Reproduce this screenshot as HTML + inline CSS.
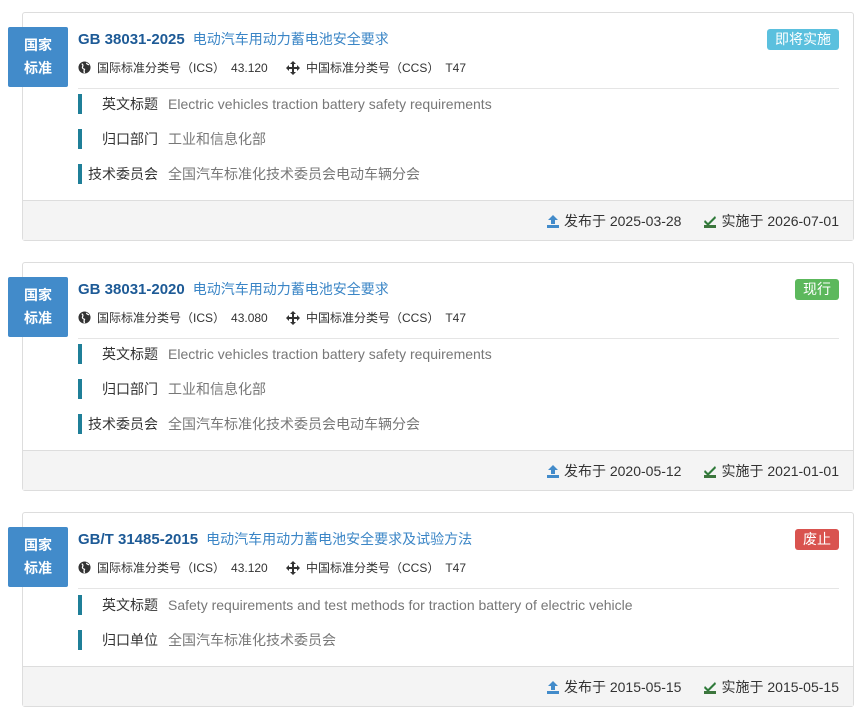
<!DOCTYPE html>
<html><head><meta charset="utf-8"><style>
body{margin:0;background:#fff;font-family:"Liberation Sans","Noto Sans CJK SC",sans-serif;width:856px;height:711px;overflow:hidden;position:relative}
.card{position:absolute;left:22px;width:830px;border:1px solid #ddd;border-radius:3px;background:#fff}
.badge{position:absolute;left:-15px;top:14px;width:60px;height:60px;background:#428bca;border-radius:2px;color:#fff;font-size:14px;font-weight:bold;text-align:center;line-height:23px;padding-top:7px;box-sizing:border-box}
.title{position:absolute;left:55px;top:16px;font-size:15px;color:#1d5a96;font-weight:bold;white-space:nowrap}
.title span{font-weight:normal;font-size:14px;color:#3a85c6;margin-left:8px}
.status{position:absolute;right:14px;top:16px;color:#fff;font-size:14px;padding:0 8px;height:21px;line-height:21px;border-radius:3px}
.cls{position:absolute;top:47px;font-size:12px;color:#333;white-space:nowrap;height:16px;line-height:16px}
.cls svg{position:absolute;left:0;top:1px}
.cls em{font-style:normal;margin-left:6px}
.hr{position:absolute;left:55px;right:14px;top:75px;border-top:1px solid #e5e5e5}
.row{position:absolute;left:55px;height:20px;font-size:14px;line-height:20px}
.row i{position:absolute;left:0;top:0;width:4px;height:20px;background:#1f7f98}
.row b{font-weight:normal;position:absolute;left:0;width:80px;text-align:right;color:#333;white-space:nowrap}
.row span{position:absolute;left:90px;color:#777;white-space:nowrap}
.foot{position:absolute;left:0;right:0;bottom:0;height:40px;background:#f4f4f4;border-top:1px solid #ddd;font-size:14px;color:#333;line-height:40px;text-align:right;padding-right:14px;box-sizing:border-box}
.foot svg{vertical-align:-2px;margin-right:4px}
</style></head><body>

<div class="card" style="top:12px;height:227px">
<div class="badge">国家<br>标准</div>
<div class="title">GB 38031-2025<span>电动汽车用动力蓄电池安全要求</span></div>
<div class="status" style="background:#5bc0de">即将实施</div>
<div class="cls" style="left:55px;padding-left:19px"><svg width="13" height="13" viewBox="0 0 14 14"><circle cx="7" cy="7" r="6.5" fill="#333"/><path d="M4 3q2 1 1 3t2 3q-1 2 0 4 M9 2q1 2 3 2" stroke="#fff" stroke-width="1.3" fill="none"/></svg>国际标准分类号（ICS）<em>43.120</em></div>
<div class="cls" style="left:263px;padding-left:20px"><svg width="14" height="14" viewBox="0 0 14 14"><path d="M7 0l3 3H8v3h3V4l3 3-3 3V8H8v3h2l-3 3-3-3h2V8H3v2L0 7l3-3v2h3V3H4z" fill="#333"/></svg>中国标准分类号（CCS）<em>T47</em></div>
<div class="hr"></div>
<div class="row" style="top:81px"><i></i><b>英文标题</b><span>Electric vehicles traction battery safety requirements</span></div>
<div class="row" style="top:116px"><i></i><b>归口部门</b><span>工业和信息化部</span></div>
<div class="row" style="top:151px"><i></i><b>技术委员会</b><span>全国汽车标准化技术委员会电动车辆分会</span></div>
<div class="foot"><svg width="14" height="14" viewBox="0 0 14 14"><path d="M7 1L2 6h3v4h4V6h3z M1 11h12v3H1z" fill="#428bca"/></svg>发布于 2025-03-28<span style="display:inline-block;width:22px"></span><svg width="14" height="14" viewBox="0 0 14 14"><path d="M2 6l3 3 7-7 1 2-8 8-4-4z" fill="#2f7a3a"/><rect x="1" y="11" width="12" height="3" fill="#3c763d"/></svg>实施于 2026-07-01</div>
</div>

<div class="card" style="top:262px;height:227px">
<div class="badge">国家<br>标准</div>
<div class="title">GB 38031-2020<span>电动汽车用动力蓄电池安全要求</span></div>
<div class="status" style="background:#5cb85c">现行</div>
<div class="cls" style="left:55px;padding-left:19px"><svg width="13" height="13" viewBox="0 0 14 14"><circle cx="7" cy="7" r="6.5" fill="#333"/><path d="M4 3q2 1 1 3t2 3q-1 2 0 4 M9 2q1 2 3 2" stroke="#fff" stroke-width="1.3" fill="none"/></svg>国际标准分类号（ICS）<em>43.080</em></div>
<div class="cls" style="left:263px;padding-left:20px"><svg width="14" height="14" viewBox="0 0 14 14"><path d="M7 0l3 3H8v3h3V4l3 3-3 3V8H8v3h2l-3 3-3-3h2V8H3v2L0 7l3-3v2h3V3H4z" fill="#333"/></svg>中国标准分类号（CCS）<em>T47</em></div>
<div class="hr"></div>
<div class="row" style="top:81px"><i></i><b>英文标题</b><span>Electric vehicles traction battery safety requirements</span></div>
<div class="row" style="top:116px"><i></i><b>归口部门</b><span>工业和信息化部</span></div>
<div class="row" style="top:151px"><i></i><b>技术委员会</b><span>全国汽车标准化技术委员会电动车辆分会</span></div>
<div class="foot"><svg width="14" height="14" viewBox="0 0 14 14"><path d="M7 1L2 6h3v4h4V6h3z M1 11h12v3H1z" fill="#428bca"/></svg>发布于 2020-05-12<span style="display:inline-block;width:22px"></span><svg width="14" height="14" viewBox="0 0 14 14"><path d="M2 6l3 3 7-7 1 2-8 8-4-4z" fill="#2f7a3a"/><rect x="1" y="11" width="12" height="3" fill="#3c763d"/></svg>实施于 2021-01-01</div>
</div>

<div class="card" style="top:512px;height:193px">
<div class="badge">国家<br>标准</div>
<div class="title">GB/T 31485-2015<span>电动汽车用动力蓄电池安全要求及试验方法</span></div>
<div class="status" style="background:#d9534f">废止</div>
<div class="cls" style="left:55px;padding-left:19px"><svg width="13" height="13" viewBox="0 0 14 14"><circle cx="7" cy="7" r="6.5" fill="#333"/><path d="M4 3q2 1 1 3t2 3q-1 2 0 4 M9 2q1 2 3 2" stroke="#fff" stroke-width="1.3" fill="none"/></svg>国际标准分类号（ICS）<em>43.120</em></div>
<div class="cls" style="left:263px;padding-left:20px"><svg width="14" height="14" viewBox="0 0 14 14"><path d="M7 0l3 3H8v3h3V4l3 3-3 3V8H8v3h2l-3 3-3-3h2V8H3v2L0 7l3-3v2h3V3H4z" fill="#333"/></svg>中国标准分类号（CCS）<em>T47</em></div>
<div class="hr"></div>
<div class="row" style="top:82px"><i></i><b>英文标题</b><span>Safety requirements and test methods for traction battery of electric vehicle</span></div>
<div class="row" style="top:117px"><i></i><b>归口单位</b><span>全国汽车标准化技术委员会</span></div>
<div class="foot"><svg width="14" height="14" viewBox="0 0 14 14"><path d="M7 1L2 6h3v4h4V6h3z M1 11h12v3H1z" fill="#428bca"/></svg>发布于 2015-05-15<span style="display:inline-block;width:22px"></span><svg width="14" height="14" viewBox="0 0 14 14"><path d="M2 6l3 3 7-7 1 2-8 8-4-4z" fill="#2f7a3a"/><rect x="1" y="11" width="12" height="3" fill="#3c763d"/></svg>实施于 2015-05-15</div>
</div>

</body></html>
